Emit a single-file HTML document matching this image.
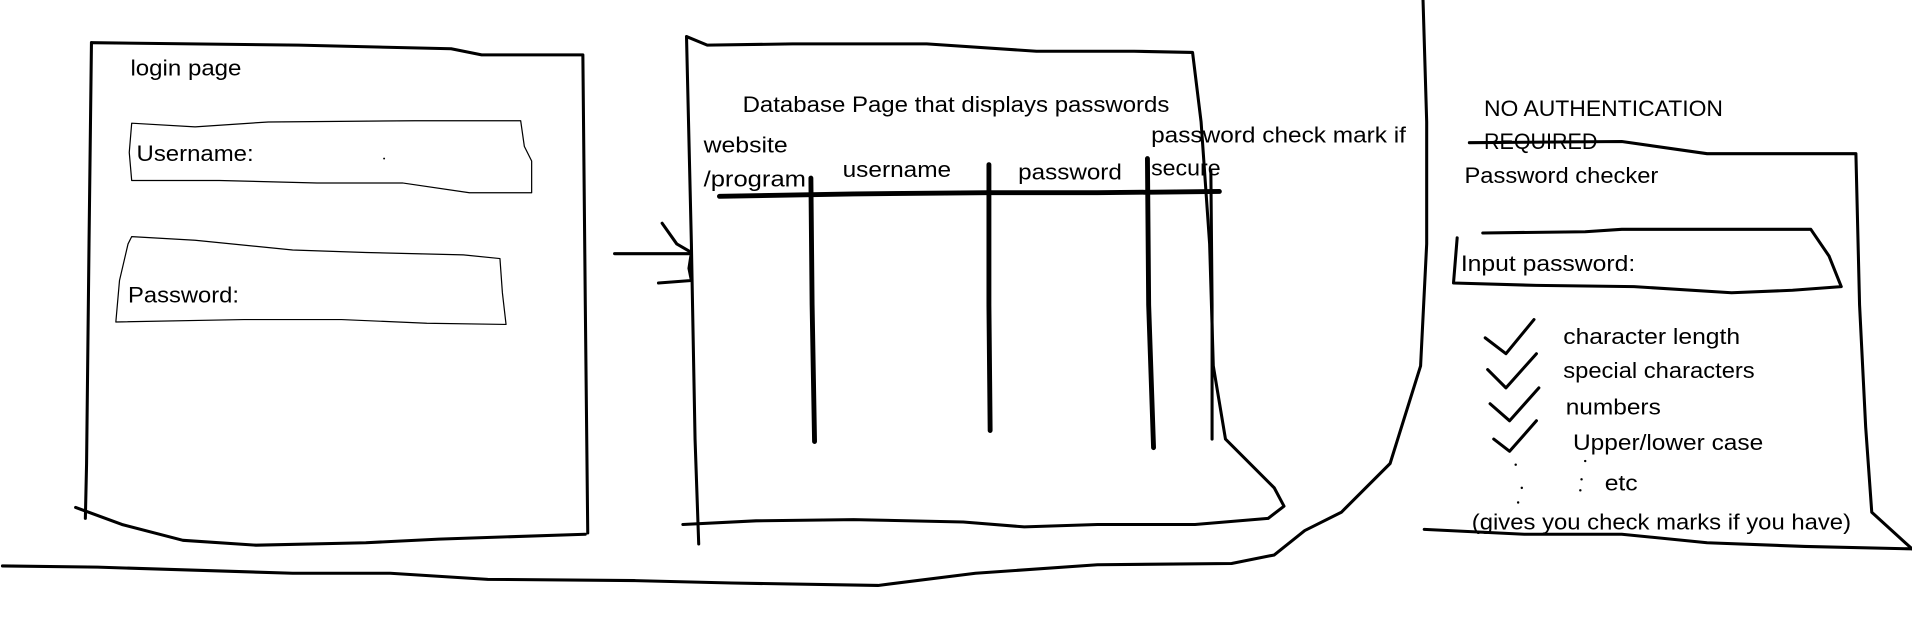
<!DOCTYPE html>
<html><head><style>html,body{margin:0;padding:0;background:#fff;overflow:hidden}svg{display:block}text{font-family:"Liberation Sans",sans-serif;font-size:18.5px;fill:#000}</style></head>
<body>
<svg width="1912" height="644" viewBox="0 0 1568 528" preserveAspectRatio="none">
<g fill="none" stroke="#000" stroke-width="2.5" stroke-linecap="round" stroke-linejoin="round">
<path d="M75 35 L245 37 L370 40 L395 45 L478 45 L480 250 L482 437"/>
<path d="M75 35 L73 200 L71 380 L70 425"/>
<path d="M62 416 L100 430 L150 443 L210 447 L300 445 L360 442 L480 438"/>
<path stroke-width="1" d="M108 101 L160 104 L220 100 L340 99 L427 99 L430 120 L436 132 L436 158 L385 158 L330 150 L260 150 L180 148 L108 148 L106 125 Z"/>
<path stroke-width="1" d="M108 194 L160 197 L240 205 L300 207 L380 209 L410 212 L412 240 L415 266 L350 265 L280 262 L200 262 L95 264 L98 230 L105 200 Z"/>
<path d="M504 208 L565 208"/>
<path d="M543 183 L555 200 L567 207 L565 220 L567 230 L540 232"/>
<path d="M563 30 L567 200 L570 360 L573 446"/>
<path d="M563 30 L580 37 L650 36 L760 36 L850 42 L930 42 L978 43 L985 100 L992 200 L995 300 L1005 360 L1045 400 L1053 415 L1040 425 L980 430 L900 430 L840 432 L790 428 L700 426 L620 427 L560 430"/>
<path stroke-width="4" d="M590 161 L700 159 L810 158 L900 158 L1000 157"/>
<path stroke-width="4" d="M665 146 L666 250 L668 362"/>
<path stroke-width="4" d="M811 135 L811 250 L812 353"/>
<path stroke-width="4" d="M941 130 L942 250 L946 367"/>
<path d="M993 140 L994 250 L994 360"/>
<path d="M1167 0 L1170 100 L1170 200 L1165 300 L1140 380 L1100 420 L1070 435 L1045 455 L1010 462 L900 463 L800 470 L720 480 L600 478 L520 476 L400 475 L320 470 L240 470 L80 465 L2 464"/>
<path d="M1205 117 L1330 116 L1400 126 L1522 126 L1525 250 L1530 350 L1535 420 L1568 450"/>
<path d="M1168 434 L1250 438 L1330 438 L1400 445 L1480 448 L1568 450"/>
<path d="M1216 191 L1300 190 L1330 188 L1485 188 L1500 210 L1510 235 L1470 238 L1420 240 L1340 235 L1260 234 L1192 232 L1195 195"/>
<path d="M1218 277 L1235 290 L1258 262"/>
<path d="M1220 303 L1235 318 L1260 290"/>
<path d="M1222 331 L1238 345 L1262 318"/>
<path d="M1225 360 L1238 370 L1260 345"/>
</g>
<g fill="#000"><circle cx="1243" cy="381" r="1"/><circle cx="1248" cy="400" r="1"/><circle cx="1245" cy="412" r="1"/><circle cx="1300" cy="378" r="1"/><circle cx="1297" cy="393" r="1"/><circle cx="1296" cy="402" r="1"/><circle cx="315" cy="130" r="0.8"/></g>
<g lengthAdjust="spacingAndGlyphs">
<text x="107" y="62" textLength="91" lengthAdjust="spacingAndGlyphs">login page</text>
<text x="112" y="132" textLength="96" lengthAdjust="spacingAndGlyphs">Username:</text>
<text x="105" y="248" textLength="91" lengthAdjust="spacingAndGlyphs">Password:</text>
<text x="609" y="92" textLength="350" lengthAdjust="spacingAndGlyphs">Database Page that displays passwords</text>
<text x="577" y="125" textLength="69" lengthAdjust="spacingAndGlyphs">website</text>
<text x="577" y="153" textLength="84" lengthAdjust="spacingAndGlyphs">/program</text>
<text x="691" y="145" textLength="89" lengthAdjust="spacingAndGlyphs">username</text>
<text x="835" y="147" textLength="85" lengthAdjust="spacingAndGlyphs">password</text>
<text x="944" y="117" textLength="209" lengthAdjust="spacingAndGlyphs">password check mark if</text>
<text x="944" y="144" textLength="57" lengthAdjust="spacingAndGlyphs">secure</text>
<text x="1217" y="95" textLength="196" lengthAdjust="spacingAndGlyphs">NO AUTHENTICATION</text>
<text x="1217" y="122" textLength="93" lengthAdjust="spacingAndGlyphs">REQUIRED</text>
<text x="1201" y="150" textLength="159" lengthAdjust="spacingAndGlyphs">Password checker</text>
<text x="1198" y="222" textLength="143" lengthAdjust="spacingAndGlyphs">Input password:</text>
<text x="1282" y="282" textLength="145" lengthAdjust="spacingAndGlyphs">character length</text>
<text x="1282" y="310" textLength="157" lengthAdjust="spacingAndGlyphs">special characters</text>
<text x="1284" y="340" textLength="78" lengthAdjust="spacingAndGlyphs">numbers</text>
<text x="1290" y="369" textLength="156" lengthAdjust="spacingAndGlyphs">Upper/lower case</text>
<text x="1316" y="402" textLength="27" lengthAdjust="spacingAndGlyphs">etc</text>
<text x="1207" y="434" textLength="311" lengthAdjust="spacingAndGlyphs">(gives you check marks if you have)</text>
</g>
</svg>
</body></html>
